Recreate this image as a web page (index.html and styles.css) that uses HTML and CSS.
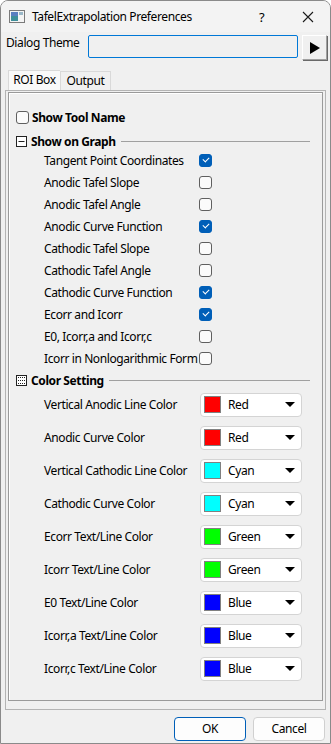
FILE: index.html
```html
<!DOCTYPE html>
<html lang="en">
<head>
    <meta charset="UTF-8">
    <title>TafelExtrapolation Preferences</title>
    <link rel="stylesheet" href="styles.css">
</head>
<body>
    <div class="janela">
        <div class="titulo">
            <svg class="icone-app" width="16" height="13" viewBox="0 0 16 13">
                <rect x="0.5" y="0.5" width="15" height="12" fill="#f4f4f4" stroke="#7a7a7a"/>
                <rect x="2" y="2" width="7" height="9" fill="#3f8f9a"/>
                <rect x="2" y="2" width="7" height="4" fill="#5a7fc0"/>
                <rect x="10" y="2" width="4" height="3" fill="#9ab8c8"/>
            </svg>
            <span class="titulo-texto">TafelExtrapolation Preferences</span>
            <span class="ajuda">?</span>
            <svg class="fechar" width="12" height="12" viewBox="0 0 12 12">
                <path d="M1 1 L11 11 M11 1 L1 11" stroke="#1a1a1a" stroke-width="1.1"/>
            </svg>
        </div>

        <div class="tema">
            <span class="tema-label">Dialog Theme</span>
            <div class="tema-campo"></div>
            <div class="tema-botao">
                <svg width="10" height="12" viewBox="0 0 10 12"><path d="M0 0 L10 6 L0 12 Z" fill="#000"/></svg>
            </div>
        </div>

        <div class="abas">
            <div class="aba ativa">ROI Box</div>
            <div class="aba">Output</div>
        </div>

        <div class="painel">
            <div class="grupo">
                <div class="linha-topo">
                    <span class="caixa"></span>
                    <span class="negrito">Show Tool Name</span>
                </div>

                <div class="cabecalho">
                    <svg class="icone-grupo" width="11" height="11" viewBox="0 0 11 11">
                        <rect x="0.5" y="0.5" width="10" height="10" fill="#fff" stroke="#222"/>
                        <path d="M2.5 5.5 H8.5" stroke="#222"/>
                    </svg>
                    <span class="negrito">Show on Graph</span>
                    <span class="regua"></span>
                </div>

                <div class="item"><span class="rotulo">Tangent Point Coordinates</span><span class="caixa marcada"></span></div>
                <div class="item"><span class="rotulo">Anodic Tafel Slope</span><span class="caixa"></span></div>
                <div class="item"><span class="rotulo">Anodic Tafel Angle</span><span class="caixa"></span></div>
                <div class="item"><span class="rotulo">Anodic Curve Function</span><span class="caixa marcada"></span></div>
                <div class="item"><span class="rotulo">Cathodic Tafel Slope</span><span class="caixa"></span></div>
                <div class="item"><span class="rotulo">Cathodic Tafel Angle</span><span class="caixa"></span></div>
                <div class="item"><span class="rotulo">Cathodic Curve Function</span><span class="caixa marcada"></span></div>
                <div class="item"><span class="rotulo">Ecorr and Icorr</span><span class="caixa marcada"></span></div>
                <div class="item"><span class="rotulo">E0, Icorr,a and Icorr,c</span><span class="caixa"></span></div>
                <div class="item"><span class="rotulo">Icorr in Nonlogarithmic Form</span><span class="caixa"></span></div>

                <div class="cabecalho cab-cor">
                    <svg class="icone-grupo" width="11" height="11" viewBox="0 0 11 11">
                        <rect x="0.5" y="0.5" width="10" height="10" fill="#fff" stroke="#222"/>
                        <path d="M2 2.5 H9 M2 5.5 H9 M2 8.5 H9" stroke="#222" stroke-dasharray="1 1"/>
                    </svg>
                    <span class="negrito">Color Setting</span>
                    <span class="regua"></span>
                </div>

                <div class="cor"><span class="rotulo">Vertical Anodic Line Color</span><div class="combo"><span class="amostra vermelho"></span><span class="combo-texto">Red</span><span class="seta"></span></div></div>
                <div class="cor"><span class="rotulo">Anodic Curve Color</span><div class="combo"><span class="amostra vermelho"></span><span class="combo-texto">Red</span><span class="seta"></span></div></div>
                <div class="cor"><span class="rotulo">Vertical Cathodic Line Color</span><div class="combo"><span class="amostra ciano"></span><span class="combo-texto">Cyan</span><span class="seta"></span></div></div>
                <div class="cor"><span class="rotulo">Cathodic Curve Color</span><div class="combo"><span class="amostra ciano"></span><span class="combo-texto">Cyan</span><span class="seta"></span></div></div>
                <div class="cor"><span class="rotulo">Ecorr Text/Line Color</span><div class="combo"><span class="amostra verde"></span><span class="combo-texto">Green</span><span class="seta"></span></div></div>
                <div class="cor"><span class="rotulo">Icorr Text/Line Color</span><div class="combo"><span class="amostra verde"></span><span class="combo-texto">Green</span><span class="seta"></span></div></div>
                <div class="cor"><span class="rotulo">E0 Text/Line Color</span><div class="combo"><span class="amostra azul"></span><span class="combo-texto">Blue</span><span class="seta"></span></div></div>
                <div class="cor"><span class="rotulo">Icorr,a Text/Line Color</span><div class="combo"><span class="amostra azul"></span><span class="combo-texto">Blue</span><span class="seta"></span></div></div>
                <div class="cor"><span class="rotulo">Icorr,c Text/Line Color</span><div class="combo"><span class="amostra azul"></span><span class="combo-texto">Blue</span><span class="seta"></span></div></div>
            </div>
        </div>

        <div class="rodape">
            <div class="botao principal">OK</div>
            <div class="botao">Cancel</div>
        </div>
    </div>
</body>
</html>
```

FILE: styles.css
```css
* {
    box-sizing: border-box;
}
body {
    margin: 0;
    font-family: "Noto Sans", sans-serif;
    font-size: 12px;
    letter-spacing: -0.4px;
    color: #000;
    background-color: #ffffff;
}
.janela {
    width: 331px;
    height: 744px;
    border: 1px solid #8a8a8a;
    border-radius: 8px 8px 0 0;
    background-color: #f0f0f0;
    overflow: hidden;
}
.titulo {
    height: 31px;
    display: flex;
    align-items: center;
    background-color: #f3f3f3;
}
.icone-app {
    margin-left: 8px;
    margin-right: 7px;
}
.titulo-texto {
    flex: 1;
}
.ajuda {
    width: 20px;
    font-size: 13px;
    margin-right: 23px;
}
.fechar {
    margin-right: 16px;
}
.tema {
    height: 29px;
    display: flex;
    align-items: flex-start;
    padding-left: 5px;
}
.tema-label {
    margin-top: 3px;
    line-height: 16px;
    width: 82px;
}
.tema-campo {
    margin-top: 3px;
    width: 210px;
    height: 23px;
    border: 1px solid #0078d7;
    border-radius: 2px;
    background-color: #f0f0f0;
}
.tema-botao {
    margin-top: 3px;
    margin-left: 4px;
    width: 25px;
    height: 25px;
    border: 1px solid #a0a0a0;
    border-top-color: #ffffff;
    border-left-color: #ffffff;
    box-shadow: 1px 1px 0 #696969;
    display: flex;
    align-items: center;
    justify-content: center;
}
.abas {
    display: flex;
    margin-top: 9px;
    padding-left: 7px;
    height: 20px;
    align-items: flex-end;
}
.aba {
    width: 51px;
    height: 19px;
    border: 1px solid #d9d9d9;
    border-bottom: none;
    line-height: 18px;
    text-align: center;
    background-color: #f0f0f0;
}
.aba.ativa {
    width: 52px;
    height: 20px;
    background-color: #f9f9f9;
    border-right: none;
}
.painel {
    margin: 0 4px;
    height: 620px;
    border: 1px solid #b4b4b4;
    padding: 1px 2px 8px 2px;
}
.grupo {
    height: 100%;
    border: 1px solid #9a9a9a;
    box-shadow: inset 1px 1px 0 #ffffff;
    padding: 13px 0 0 7px;
}
.negrito {
    font-weight: bold;
}
.linha-topo {
    height: 22px;
    display: flex;
    align-items: center;
}
.linha-topo .caixa {
    margin-right: 3px;
}
.caixa {
    width: 13px;
    height: 13px;
    border: 1px solid #5f5f5f;
    border-radius: 3px;
    background-color: #fbfbfb;
    display: inline-block;
}
.caixa.marcada {
    background-color: #005fb8;
    border-color: #005fb8;
    position: relative;
}
.caixa.marcada::after {
    content: "";
    position: absolute;
    left: 3px;
    top: 2px;
    width: 5px;
    height: 3px;
    border-left: 1px solid #fff;
    border-bottom: 1px solid #fff;
    transform: rotate(-45deg);
}
.cabecalho {
    height: 16px;
    margin-top: 5px;
    display: flex;
    align-items: center;
    padding-right: 12px;
}
.icone-grupo {
    margin-right: 4px;
}
.regua {
    flex: 1;
    height: 1px;
    background-color: #a0a0a0;
    margin-left: 5px;
}
.item {
    height: 22px;
    display: flex;
    align-items: center;
    padding-left: 28px;
}
.rotulo {
    width: 155px;
    white-space: nowrap;
}
.cab-cor {
    margin-top: 3px;
    height: 16px;
}
.cor {
    height: 33px;
    display: flex;
    align-items: center;
    padding-left: 28px;
}
.cor .rotulo {
    width: 156px;
}
.combo {
    width: 102px;
    height: 24px;
    border: 1px solid #d4d4d4;
    border-radius: 4px;
    background-color: #ffffff;
    display: flex;
    align-items: center;
    padding-left: 3px;
}
.amostra {
    width: 17px;
    height: 17px;
    border: 1px solid #808080;
}
.vermelho { background-color: #ff0000; }
.ciano { background-color: #00ffff; }
.verde { background-color: #00ff00; }
.azul { background-color: #0000ff; }
.combo-texto {
    margin-left: 7px;
    flex: 1;
}
.seta {
    width: 0;
    height: 0;
    border-left: 5px solid transparent;
    border-right: 5px solid transparent;
    border-top: 5px solid #000;
    margin-right: 6px;
}
.rodape {
    display: flex;
    justify-content: flex-end;
    gap: 7px;
    margin-top: 7px;
    padding-right: 5px;
}
.botao {
    width: 72px;
    height: 24px;
    border: 1px solid #d0d0d0;
    border-radius: 4px;
    background-color: #fdfdfd;
    text-align: center;
    line-height: 22px;
}
.botao.principal {
    border-color: #005fb8;
}
```
